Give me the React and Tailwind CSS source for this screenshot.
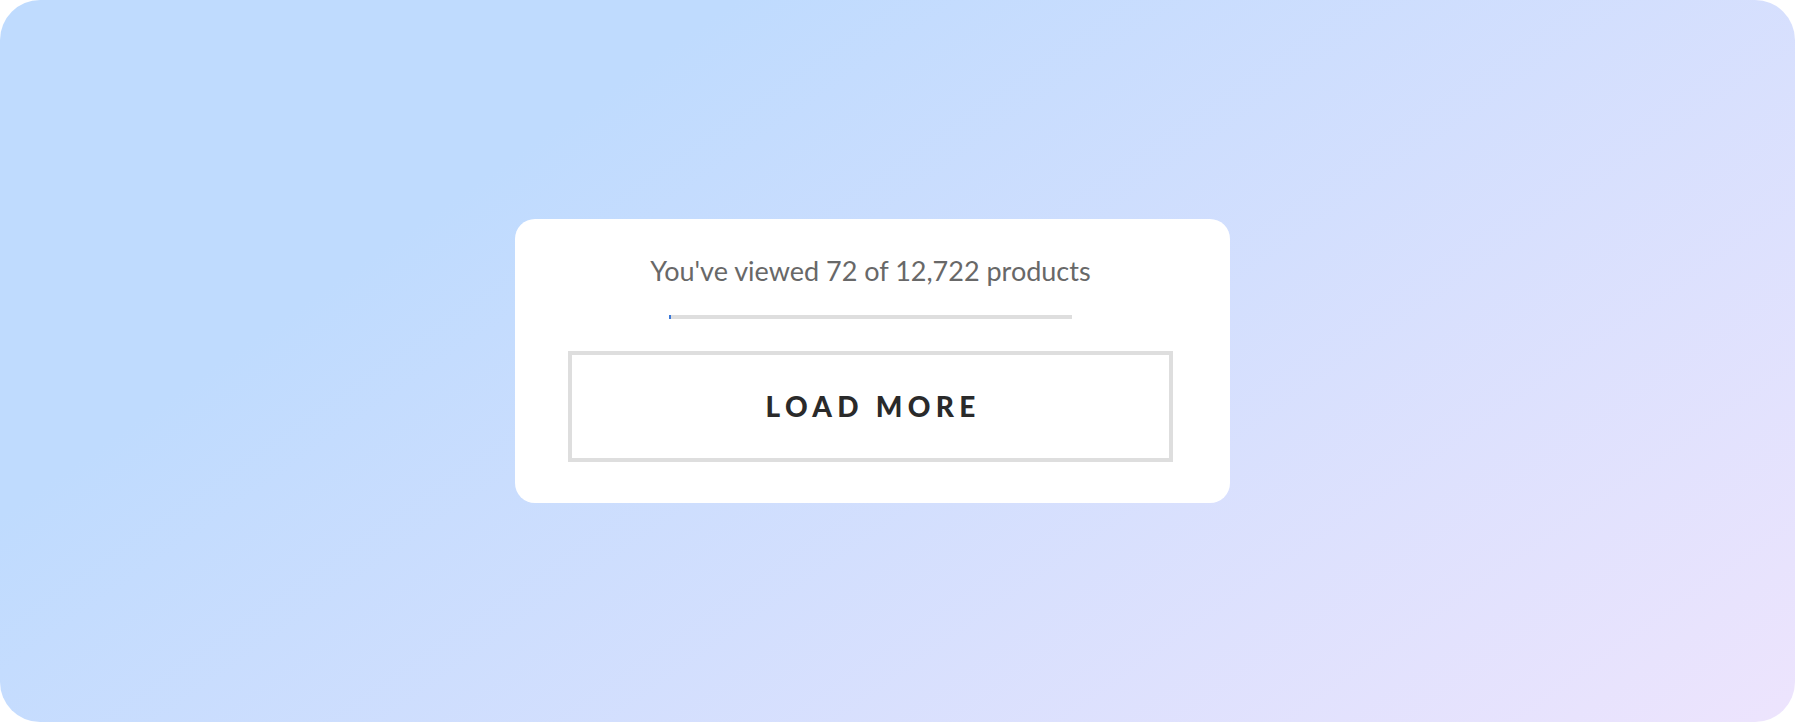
import React from "react";

export default function App() {
  return (
    <div className="w-[1795px] h-[722px] bg-white">
      <div className="w-[1795px] h-[722px] rounded-[40px] bg-[linear-gradient(145deg,#bfdbfe_26%,#ede4fd_100%)] flex items-center pl-[515px]">
        <div className="w-[715px] h-[284px] rounded-[20px] bg-white flex flex-col items-center pr-[4px]">
          <div
            className="mt-[35px] h-[34px] leading-[34px] text-[27px] text-[#686868] whitespace-nowrap"
            style={{ fontFamily: "Lato, 'Liberation Sans', sans-serif" }}
          >
            You've viewed 72 of 12,722 products
          </div>
          <div className="mt-[27px] w-[403px] h-[4px] bg-[#dedede] flex">
            <div className="w-[2px] h-[4px] bg-[#3a78d8]" />
          </div>
          <button className="mt-[32px] w-[605px] h-[111px] border-[4px] border-[#dedede] bg-white flex items-center justify-center pb-[2px]">
            <span
              className="text-[28px] font-black tracking-[0.19em] text-[#2a2a2a] leading-none pl-[0.19em]"
              style={{ fontFamily: "Lato, 'Liberation Sans', sans-serif" }}
            >
              LOAD MORE
            </span>
          </button>
        </div>
      </div>
    </div>
  );
}
